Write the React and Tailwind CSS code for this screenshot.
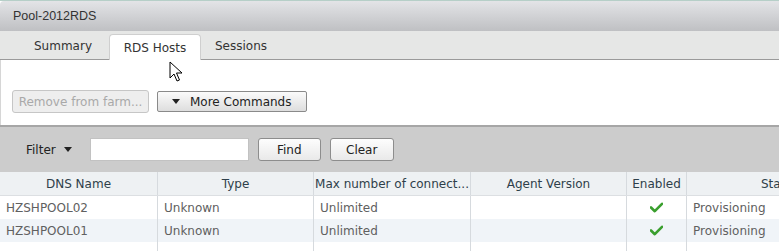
import React from 'react';

// Колонки таблиці хостів
const columns = [
    { title: 'DNS Name', w: 'w-[158px]' },
    { title: 'Type', w: 'w-[156px]' },
    { title: 'Max number of connect...', w: 'w-[157px]' },
    { title: 'Agent Version', w: 'w-[156px]' },
    { title: 'Enabled', w: 'w-[60px]' },
    { title: 'Status', w: 'w-[186px]' },
];

const hosts = [
    { dns: 'HZSHPOOL02', type: 'Unknown', max: 'Unlimited', agent: '', enabled: true, status: 'Provisioning' },
    { dns: 'HZSHPOOL01', type: 'Unknown', max: 'Unlimited', agent: '', enabled: true, status: 'Provisioning' },
];

const Check = () => (
    <svg width="13" height="11" viewBox="0 0 13 11">
        <path d="M1 5.5 L4.8 9.2 L12 1.8" fill="none" stroke="#3a9f2e" strokeWidth="2.6" strokeLinecap="round" strokeLinejoin="round" />
    </svg>
);

const Caret = () => (
    <svg width="8" height="5" viewBox="0 0 8 5">
        <path d="M0 0 H8 L4 5 Z" fill="#222" />
    </svg>
);

const Cursor = () => (
    <svg className="absolute left-[169px] top-[61px]" width="14" height="22" viewBox="0 0 14 22">
        <path d="M1 1 L1 17 L5 13 L8 20 L10.5 19 L7.5 12 L13 12 Z" fill="#fff" stroke="#000" strokeWidth="1" strokeLinejoin="miter" />
    </svg>
);

export default function App() {
    return (
        <div className="relative w-[779px] h-[251px] overflow-hidden bg-white text-[12px] text-[#333] font-['DejaVu_Sans',sans-serif]">
            {/* верхня смуга */}
            <div className="h-[1px] bg-[#b6cfc8]" />

            {/* заголовок */}
            <div className="h-[30px] flex items-center pl-[13px] bg-gradient-to-b from-[#e3e4e7] to-[#bfc0c3] rounded-tl-[4px] font-['Liberation_Sans',sans-serif] text-[12.5px] text-[#333]">
                Pool-2012RDS
            </div>

            {/* вкладки */}
            <div className="h-[29px] flex items-end bg-[#e6e7e6] border-b border-[#9a9a9a]">
                <div className="ml-[34px] mb-[4px]">Summary</div>
                <div className="ml-[17px] w-[92px] h-[26px] -mb-[1px] flex items-center justify-center bg-white border border-b-0 border-[#cfcfcf] rounded-t-[4px]">
                    RDS Hosts
                </div>
                <div className="ml-[14px] mb-[4px]">Sessions</div>
            </div>

            {/* кнопки дій */}
            <div className="h-[65px] border-l border-[#d6d6d6] flex items-start pt-[30px] pl-[11px]">
                <button className="w-[137px] h-[23px] bg-[#eeeeee] border border-[#c6c6c6] rounded-[3px] text-[#a9a9a9] text-[12px]">
                    Remove from farm...
                </button>
                <button className="ml-[8px] mt-[1px] w-[150px] h-[21px] flex items-center pl-[14px] gap-[10px] bg-gradient-to-b from-[#fbfbfb] to-[#dedede] border border-[#8a8a8a] rounded-[2px] text-[#222] text-[12px]">
                    <Caret />
                    More Commands
                </button>
            </div>

            {/* фільтр */}
            <div className="h-[47px] border-t-[2px] border-[#a6a6a6] bg-[#cccccc] flex items-center">
                <div className="ml-[26px] flex items-center gap-[8px] text-[#222]">
                    Filter
                    <Caret />
                </div>
                <div className="ml-[18px] w-[159px] h-[23px] bg-white border border-[#c2c2c2]" />
                <button className="ml-[9px] w-[63px] h-[23px] bg-gradient-to-b from-[#fdfdfd] to-[#e9e9e9] border border-[#8d8d8d] rounded-[3px] text-[#222] text-[12px]">
                    Find
                </button>
                <button className="ml-[9px] w-[64px] h-[23px] bg-gradient-to-b from-[#fdfdfd] to-[#e9e9e9] border border-[#8d8d8d] rounded-[3px] text-[#222] text-[12px]">
                    Clear
                </button>
            </div>

            {/* таблиця */}
            <div className="flex h-[24px] bg-[#eef1f3] border-b border-[#dcdfe2] text-[#2e3f4a] w-[873px]">
                {columns.map((c, i) => (
                    <div key={c.title} className={`${c.w} shrink-0 flex items-center justify-center whitespace-nowrap overflow-hidden ${i < columns.length - 1 ? 'border-r border-[#d6dade]' : ''}`}>
                        {c.title}
                    </div>
                ))}
            </div>
            {hosts.map((h, r) => (
                <div key={h.dns} className={`flex h-[23px] w-[873px] text-[#606060] ${r % 2 ? 'bg-[#f0f4f8]' : 'bg-white'}`}>
                    <div className="w-[158px] shrink-0 pl-[6px] flex items-center border-r border-[#d6dade]">{h.dns}</div>
                    <div className="w-[156px] shrink-0 pl-[6px] flex items-center border-r border-[#d6dade]">{h.type}</div>
                    <div className="w-[157px] shrink-0 pl-[6px] flex items-center border-r border-[#d6dade]">{h.max}</div>
                    <div className="w-[156px] shrink-0 pl-[6px] flex items-center border-r border-[#d6dade]">{h.agent}</div>
                    <div className="w-[60px] shrink-0 flex items-center justify-center border-r border-[#d6dade]">{h.enabled && <Check />}</div>
                    <div className="w-[186px] shrink-0 pl-[6px] flex items-center">{h.status}</div>
                </div>
            ))}
            <div className="flex h-[20px] w-[873px]">
                <div className="w-[158px] shrink-0 border-r border-[#d6dade]" />
                <div className="w-[156px] shrink-0 border-r border-[#d6dade]" />
                <div className="w-[157px] shrink-0 border-r border-[#d6dade]" />
                <div className="w-[156px] shrink-0 border-r border-[#d6dade]" />
                <div className="w-[60px] shrink-0 border-r border-[#d6dade]" />
            </div>

            <Cursor />
        </div>
    );
}
